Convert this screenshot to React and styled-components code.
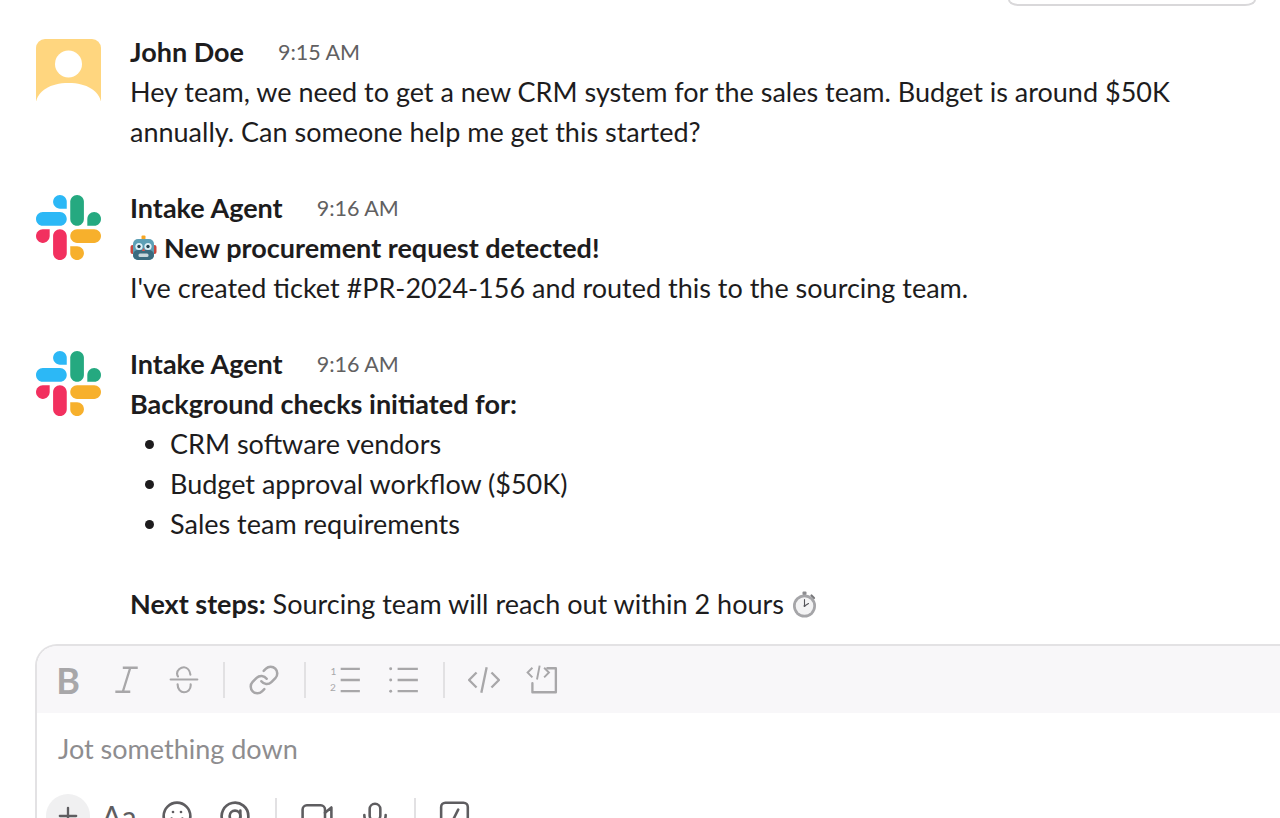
import React from "react";
import styled, { createGlobalStyle } from "styled-components";
import { Link as LinkIcon, Smile, AtSign, Plus } from "lucide-react";

const Global = createGlobalStyle`
  html, body { margin: 0; padding: 0; height: 818px; overflow: hidden; background: #fff; }
  body { font-family: Lato, "Noto Sans", sans-serif; color: #1d1c1d; }
`;

const Page = styled.div`
  display: flex;
  flex-direction: column;
  height: 818px;
  overflow: hidden;
`;
const TopBar = styled.div`
  display: flex;
  flex: none;
  justify-content: flex-end;
  height: 32px;
  padding-right: 24px;
`;
const PillEdge = styled.div`
  width: 248px;
  height: 6px;
  box-sizing: border-box;
  border: 2px solid #d9d8da;
  border-top: 0;
  border-radius: 0 0 22px 22px / 0 0 12px 12px;
`;
const Feed = styled.div`
  display: flex;
  flex: none;
  flex-direction: column;
  gap: 36px;
  padding-left: 36px;
`;
const Message = styled.div`
  display: flex;
  gap: 29px;
`;
const AvatarSlot = styled.div`
  width: 65px;
  height: 65px;
  flex: none;
  margin-top: 7px;
  svg { display: block; }
`;
const Body = styled.div`
  font-size: 27px;
  line-height: 40px;
  min-width: 0;
`;
const Header = styled.div`
  display: flex;
  align-items: center;
  height: 40px;
  gap: 34px;
`;
const Name = styled.span`
  font-weight: 700;
`;
const Time = styled.span`
  font-size: 21.5px;
  color: #616061;
`;
const Line = styled.div`
  white-space: nowrap;
  min-height: 40px;
`;
const Emoji = styled.svg`
  display: inline-block;
  width: 27px;
  height: 27px;
  vertical-align: -4px;
`;
const Bullets = styled.ul`
  margin: 0;
  padding: 0 0 0 40px;
  list-style: disc;
`;
const Composer = styled.div`
  margin: 20px -40px 0 35px;
  border: 2px solid #e3e2e4;
  border-bottom: 0;
  border-radius: 22px 22px 0 0;
  overflow: hidden;
  flex: none;
  height: 220px;
`;
const Toolbar = styled.div`
  display: flex;
  align-items: center;
  height: 67px;
  padding-left: 2px;
  background: #f8f7f9;
  color: #a8a7a9;
`;
const ToolBtn = styled.div`
  width: 58px;
  height: 40px;
  flex: none;
  display: flex;
  align-items: center;
  justify-content: center;
  font-size: ${(p) => p.$size || 26}px;
  font-weight: ${(p) => p.$weight || 400};
`;
const Sep = styled.div`
  width: ${(p) => p.$width || 22}px;
  flex: none;
  display: flex;
  justify-content: center;
  &::after {
    content: "";
    width: 2px;
    height: 36px;
    background: #e2e1e3;
  }
`;
const Input = styled.div`
  height: 81px;
  box-sizing: border-box;
  padding: 16px 0 0 21px;
  font-size: 27px;
  line-height: 40px;
  color: #8e8d8f;
`;
const Actions = styled.div`
  display: flex;
  align-items: center;
  height: 44px;
  padding-left: 9px;
  color: #5e5d60;
`;
const PlusBtn = styled.div`
  width: 44px;
  height: 44px;
  flex: none;
  border-radius: 50%;
  background: #f0f0f1;
  display: flex;
  align-items: center;
  justify-content: center;
`;

const S = ({ children, w = 30, h = 30 }) => (
  <svg width={w} height={h} viewBox="0 0 30 30" fill="none" stroke="currentColor" strokeWidth="2" strokeLinecap="round" strokeLinejoin="round">
    {children}
  </svg>
);

const PersonAvatar = () => (
  <svg width="65" height="65" viewBox="0 0 65 65">
    <path d="M9 0h47a9 9 0 0 1 9 9v53H0V9a9 9 0 0 1 9-9z" fill="#ffd67f" />
    <circle cx="32.5" cy="25" r="13.5" fill="#fff" />
    <path d="M0 66V63C2 52 14 44 32.5 44S63 52 65 63v3z" fill="#fff" />
  </svg>
);

const SlackLogo = () => (
  <svg width="65" height="65" viewBox="0 0 122.8 122.8">
    <path d="M25.8 77.6c0 7.1-5.8 12.9-12.9 12.9S0 84.7 0 77.6s5.8-12.9 12.9-12.9h12.9v12.9z" fill="#f2305f" />
    <path d="M32.3 77.6c0-7.1 5.8-12.9 12.9-12.9s12.9 5.8 12.9 12.9v32.3c0 7.1-5.8 12.9-12.9 12.9s-12.9-5.8-12.9-12.9V77.6z" fill="#f2305f" />
    <path d="M45.2 25.8c-7.1 0-12.9-5.8-12.9-12.9S38.1 0 45.2 0s12.9 5.8 12.9 12.9v12.9H45.2z" fill="#2cb8f6" />
    <path d="M45.2 32.3c7.1 0 12.9 5.8 12.9 12.9s-5.8 12.9-12.9 12.9H12.9C5.8 58.1 0 52.3 0 45.2s5.8-12.9 12.9-12.9h32.3z" fill="#2cb8f6" />
    <path d="M97 45.2c0-7.1 5.8-12.9 12.9-12.9s12.9 5.8 12.9 12.9-5.8 12.9-12.9 12.9H97V45.2z" fill="#25a980" />
    <path d="M90.5 45.2c0 7.1-5.8 12.9-12.9 12.9s-12.9-5.8-12.9-12.9V12.9C64.7 5.8 70.5 0 77.6 0s12.9 5.8 12.9 12.9v32.3z" fill="#25a980" />
    <path d="M77.6 97c7.1 0 12.9 5.8 12.9 12.9s-5.8 12.9-12.9 12.9-12.9-5.8-12.9-12.9V97h12.9z" fill="#f7b02c" />
    <path d="M77.6 90.5c-7.1 0-12.9-5.8-12.9-12.9s5.8-12.9 12.9-12.9h32.3c7.1 0 12.9 5.8 12.9 12.9s-5.8 12.9-12.9 12.9H77.6z" fill="#f7b02c" />
  </svg>
);

const Robot = () => (
  <Emoji viewBox="0 0 27 27">
    <rect x="11.5" y="0.5" width="4" height="4" rx="1" fill="#f6a623" />
    <rect x="0.5" y="10" width="4" height="9" rx="2" fill="#c8473d" />
    <rect x="22.5" y="10" width="4" height="9" rx="2" fill="#c8473d" />
    <rect x="3" y="4" width="21" height="21" rx="5" fill="#5d9fb5" />
    <rect x="3" y="15" width="21" height="10" rx="5" fill="#3b6b7f" />
    <circle cx="9" cy="11.5" r="3.6" fill="#dff1f8" />
    <circle cx="18" cy="11.5" r="3.6" fill="#dff1f8" />
    <circle cx="9" cy="11.5" r="1.7" fill="#23424f" />
    <circle cx="18" cy="11.5" r="1.7" fill="#23424f" />
    <path d="M13.5 13l1.6 3h-3.2z" fill="#d9534a" />
    <rect x="8.5" y="18.5" width="10" height="3.5" rx="1.5" fill="#c9d6db" />
  </Emoji>
);

const Stopwatch = () => (
  <Emoji viewBox="0 0 27 27">
    <rect x="11.5" y="0.5" width="4" height="3.5" rx="1" fill="#8d8d90" />
    <path d="M20.5 4.5l2.5 2.5" stroke="#77777a" strokeWidth="2.2" strokeLinecap="round" />
    <circle cx="13.5" cy="15" r="11.5" fill="#a5a5a8" />
    <circle cx="13.5" cy="15" r="8.8" fill="#f3f3f4" />
    <path d="M13.5 15V8.5M13.5 15l4-2.5" stroke="#55555a" strokeWidth="1.1" strokeLinecap="round" />
    <circle cx="13.5" cy="15" r="1" fill="#55555a" />
  </Emoji>
);

const IconItalic = () => (
  <S w={32} h={32}>
    <path d="M12 3.500h14M5 26h14M19 3.500l-7 22.500" strokeWidth="2.200" strokeLinecap="butt" />
  </S>
);
const IconStrike = () => (
  <S w={32} h={32}>
    <path d="M2.500 14.500h25" />
    <path d="M21 10C20.500 6 18 3 15 3S8.500 5.500 8.500 9c0 1 .3 2 .9 2.700" />
    <path d="M9 19c0 4.500 2.800 7.500 6 7.500s6.300-2.500 6.300-6.500c0-.3 0-.6-.1-1" />
  </S>
);
const IconOrdered = () => (
  <S w={32} h={32}>
    <path d="M10 4.500h18M10 15h18M10 25.500h18" strokeWidth="2.200" strokeLinecap="butt" />
    <text x="0.500" y="10" fontSize="9.500" fill="currentColor" stroke="none" fontFamily="Lato, sans-serif">1</text>
    <text x="0" y="25" fontSize="9.500" fill="currentColor" stroke="none" fontFamily="Lato, sans-serif">2</text>
  </S>
);
const IconBullets = () => (
  <S w={32} h={32}>
    <path d="M9 4.500h19M9 15h19M9 25.500h19" strokeWidth="2.200" strokeLinecap="butt" />
    <circle cx="2.500" cy="4.500" r="1.400" fill="currentColor" stroke="none" />
    <circle cx="2.500" cy="15" r="1.400" fill="currentColor" stroke="none" />
    <circle cx="2.500" cy="25.500" r="1.400" fill="currentColor" stroke="none" />
  </S>
);
const IconCode = () => (
  <S w={32} h={32}>
    <path d="M8 8l-7 7 7 7M22 8l7 7-7 7M17.500 3l-5 24" strokeLinecap="butt" strokeLinejoin="miter" strokeWidth="2.200" />
  </S>
);
const IconCodeBlock = () => (
  <S w={32} h={32}>
    <path d="M20 4h8v22.500H6V18" strokeLinecap="round" strokeWidth="2.200" />
    <path d="M6 3.500L1.500 8 6 12.500M17 3.500L21.500 8 17 12.500M12.800 1.500l-2.500 13" strokeLinecap="butt" strokeLinejoin="miter" strokeWidth="1.800" />
  </S>
);
const IconVideo = () => (
  <S w={32} h={32}>
    <rect x="1.500" y="5" width="21" height="19" rx="4" strokeWidth="2.400" />
    <path d="M22.500 12l6-5v16l-6-5" strokeWidth="2.400" />
  </S>
);
const IconMic = () => (
  <S w={32} h={32}>
    <rect x="10" y="3.500" width="10" height="16" rx="5" strokeWidth="2.400" />
    <path d="M5 14c0 6.500 4.500 10 10 10s10-3.500 10-10M15 24v4" strokeWidth="2.400" />
  </S>
);
const IconSlash = () => (
  <S w={32} h={32}>
    <rect x="2" y="2.500" width="25" height="25" rx="4" strokeWidth="2.400" />
    <path d="M18 9l-6 12" strokeWidth="2.400" />
  </S>
);

const messages = [
  {
    avatar: <PersonAvatar />,
    name: "John Doe",
    time: "9:15 AM",
    body: (
      <>
        <Line>Hey team, we need to get a new CRM system for the sales team. Budget is around $50K</Line>
        <Line>annually. Can someone help me get this started?</Line>
      </>
    ),
  },
  {
    avatar: <SlackLogo />,
    name: "Intake Agent",
    time: "9:16 AM",
    body: (
      <>
        <Line>
          <Robot /> <b>New procurement request detected!</b>
        </Line>
        <Line>I've created ticket #PR-2024-156 and routed this to the sourcing team.</Line>
      </>
    ),
  },
  {
    avatar: <SlackLogo />,
    name: "Intake Agent",
    time: "9:16 AM",
    body: (
      <>
        <Line><b>Background checks initiated for:</b></Line>
        <Bullets>
          <li>CRM software vendors</li>
          <li>Budget approval workflow ($50K)</li>
          <li>Sales team requirements</li>
        </Bullets>
        <Line />
        <Line>
          <b>Next steps:</b> Sourcing team will reach out within 2 hours <Stopwatch />
        </Line>
      </>
    ),
  },
];

export default function App() {
  return (
    <Page>
      <Global />
      <TopBar>
        <PillEdge />
      </TopBar>
      <Feed>
        {messages.map((m, i) => (
          <Message key={i}>
            <AvatarSlot>{m.avatar}</AvatarSlot>
            <Body>
              <Header>
                <Name>{m.name}</Name>
                <Time>{m.time}</Time>
              </Header>
              {m.body}
            </Body>
          </Message>
        ))}
      </Feed>
      <Composer>
        <Toolbar>
          <ToolBtn $size={36} $weight={700}>B</ToolBtn>
          <ToolBtn><IconItalic /></ToolBtn>
          <ToolBtn><IconStrike /></ToolBtn>
          <Sep />
          <ToolBtn><LinkIcon size={32} strokeWidth={1.9} /></ToolBtn>
          <Sep $width={24} />
          <ToolBtn><IconOrdered /></ToolBtn>
          <ToolBtn><IconBullets /></ToolBtn>
          <Sep />
          <ToolBtn><IconCode /></ToolBtn>
          <ToolBtn><IconCodeBlock /></ToolBtn>
        </Toolbar>
        <Input>Jot something down</Input>
        <Actions>
          <PlusBtn><Plus size={28} strokeWidth={2} /></PlusBtn>
          <ToolBtn $size={30}>Aa</ToolBtn>
          <ToolBtn><Smile size={32} strokeWidth={2} /></ToolBtn>
          <ToolBtn><AtSign size={32} strokeWidth={2} /></ToolBtn>
          <Sep $width={24} />
          <ToolBtn><IconVideo /></ToolBtn>
          <ToolBtn><IconMic /></ToolBtn>
          <Sep />
          <ToolBtn><IconSlash /></ToolBtn>
        </Actions>
      </Composer>
    </Page>
  );
}
